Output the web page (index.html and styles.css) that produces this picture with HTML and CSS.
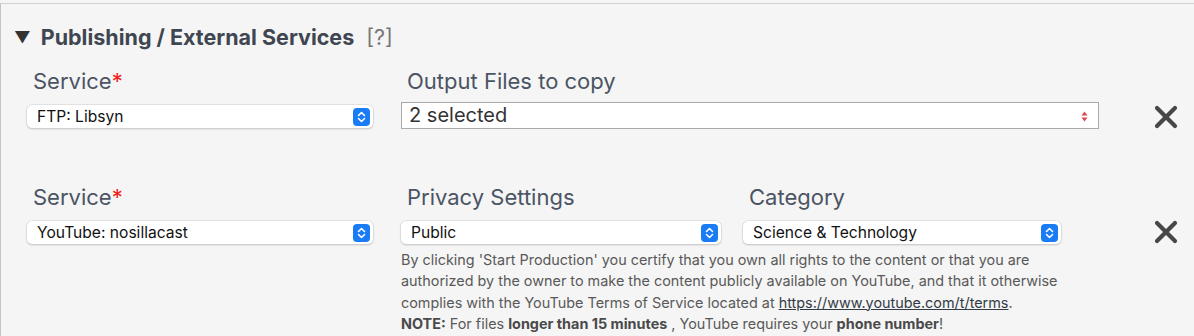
FILE: index.html
```html
<!DOCTYPE html>
<html>
<head>
<meta charset="utf-8">
<link rel="stylesheet" href="styles.css">
<title>Publishing / External Services</title>
</head>
<body>
<div class="panel">
    <h3 class="sectionTitle"><span class="caret">&#9660;</span>Publishing / External Services <span class="help">[?]</span></h3>

    <div class="serviceRow">
        <div class="field colService">
            <label>Service<span class="req">*</span></label>
            <div class="select">FTP: Libsyn
                <span class="stepper"><svg width="9" height="12" viewBox="0 0 9 12"><path d="M1.5 4.5 L4.5 1.5 L7.5 4.5 M1.5 7.5 L4.5 10.5 L7.5 7.5" fill="none" stroke="#fff" stroke-width="1.6" stroke-linecap="round" stroke-linejoin="round"/></svg></span>
            </div>
        </div>
        <div class="field colWide">
            <label>Output Files to copy</label>
            <div class="multi">2 selected
                <svg class="updown" width="7" height="11" viewBox="0 0 7 11"><path d="M0.5 4.5 L3.5 0.5 L6.5 4.5 Z M0.5 6.5 L3.5 10.5 L6.5 6.5 Z" fill="#e0474c"/></svg>
            </div>
        </div>
        <button class="remove" type="button"><svg width="24" height="24" viewBox="0 0 24 24"><path d="M3 3 L21 21 M21 3 L3 21" stroke="#474747" stroke-width="4.2" stroke-linecap="round"/></svg></button>
    </div>

    <div class="serviceRow">
        <div class="field colService">
            <label>Service<span class="req">*</span></label>
            <div class="select">YouTube: nosillacast
                <span class="stepper"><svg width="9" height="12" viewBox="0 0 9 12"><path d="M1.5 4.5 L4.5 1.5 L7.5 4.5 M1.5 7.5 L4.5 10.5 L7.5 7.5" fill="none" stroke="#fff" stroke-width="1.6" stroke-linecap="round" stroke-linejoin="round"/></svg></span>
            </div>
        </div>
        <div class="youtubeOptions">
            <div class="optionPair">
                <div class="field colPrivacy">
                    <label>Privacy Settings</label>
                    <div class="select">Public
                        <span class="stepper"><svg width="9" height="12" viewBox="0 0 9 12"><path d="M1.5 4.5 L4.5 1.5 L7.5 4.5 M1.5 7.5 L4.5 10.5 L7.5 7.5" fill="none" stroke="#fff" stroke-width="1.6" stroke-linecap="round" stroke-linejoin="round"/></svg></span>
                    </div>
                </div>
                <div class="field colCategory">
                    <label>Category</label>
                    <div class="select">Science &amp; Technology
                        <span class="stepper"><svg width="9" height="12" viewBox="0 0 9 12"><path d="M1.5 4.5 L4.5 1.5 L7.5 4.5 M1.5 7.5 L4.5 10.5 L7.5 7.5" fill="none" stroke="#fff" stroke-width="1.6" stroke-linecap="round" stroke-linejoin="round"/></svg></span>
                    </div>
                </div>
            </div>
            <p class="terms">By clicking 'Start Production' you certify that you own all rights to the content or that you are<br>
            authorized by the owner to make the content publicly available on YouTube, and that it otherwise<br>
            complies with the YouTube Terms of Service located at <a href="#">https://www.youtube.com/t/terms</a>.<br>
            <b>NOTE:</b> For files <b>longer than 15 minutes</b> , YouTube requires your <b>phone number</b>!</p>
        </div>
        <button class="remove" type="button"><svg width="24" height="24" viewBox="0 0 24 24"><path d="M3 3 L21 21 M21 3 L3 21" stroke="#474747" stroke-width="4.2" stroke-linecap="round"/></svg></button>
    </div>
</div>
</body>
</html>
```

FILE: styles.css
```css
body {margin: 0;
      background-color: #f5f5f5;
      font-family: Inter, "Noto Sans", sans-serif;
      overflow: hidden}
.panel {margin-top: 3px;
        border-top: 1px solid #d2d2d2;
        border-left: 1px solid #c4c4c4;
        height: 333px;
        box-sizing: border-box;
        padding: 0 0 0 26px}
.sectionTitle {margin: 18px 0 0 -13px;
               height: 30px;
               font-size: 21.5px;
               font-weight: 700;
               color: #3f4651;
               display: flex;
               align-items: center}
.caret {font-size: 16px;
        color: #333;
        margin-right: 10px}
.help {font-weight: 400;
       color: #777;
       margin-left: 12px}
.serviceRow {display: flex;
             align-items: flex-start}
.serviceRow + .serviceRow {margin-top: 39px}
.field label {display: block;
              padding-left: 6px;
              font-size: 22px;
              line-height: 28px;
              color: #4b5463;
              margin-top: 15px;
              margin-bottom: 10px}
.req {color: #f21b1b}
.select {position: relative;
         height: 23px;
         box-sizing: border-box;
         background: #fff;
         border-radius: 5px;
         box-shadow: 0 0 0 0.5px #cfcfcf, 0 1px 2px rgba(0,0,0,0.22);
         padding-left: 10px;
         font-size: 15.6px;
         line-height: 23px;
         color: #111}
.stepper {position: absolute;
          right: 3px;
          top: 2.5px;
          width: 17px;
          height: 18px;
          border-radius: 4px;
          background: #1a7cf5;
          display: flex;
          align-items: center;
          justify-content: center}
.colService {width: 346px;
             margin-right: 28px}
.colWide {width: 698px}
.multi {position: relative;
        height: 27px;
        margin-top: -3px;
        box-sizing: border-box;
        background: #fff;
        border: 1px solid #a9a9a9;
        padding-left: 7px;
        font-size: 20px;
        line-height: 25px;
        color: #333}
.updown {position: absolute;
         right: 10px;
         top: 8px}
.remove {margin-left: 55px;
         margin-top: 53px;
         padding: 0;
         border: none;
         background: none;
         width: 24px;
         height: 24px}
.serviceRow + .serviceRow .remove {margin-left: 93px;
                                   margin-top: 52px}
.youtubeOptions {width: 660px}
.optionPair {display: flex}
.colPrivacy {width: 320px;
             margin-right: 22px}
.colCategory {width: 318px}
.terms {margin: 5px 0 0 0;
        font-size: 14.4px;
        line-height: 21.3px;
        color: #595959;
        white-space: nowrap}
.terms a {color: #333b47}
.terms b {color: #4a4a4a}
```
